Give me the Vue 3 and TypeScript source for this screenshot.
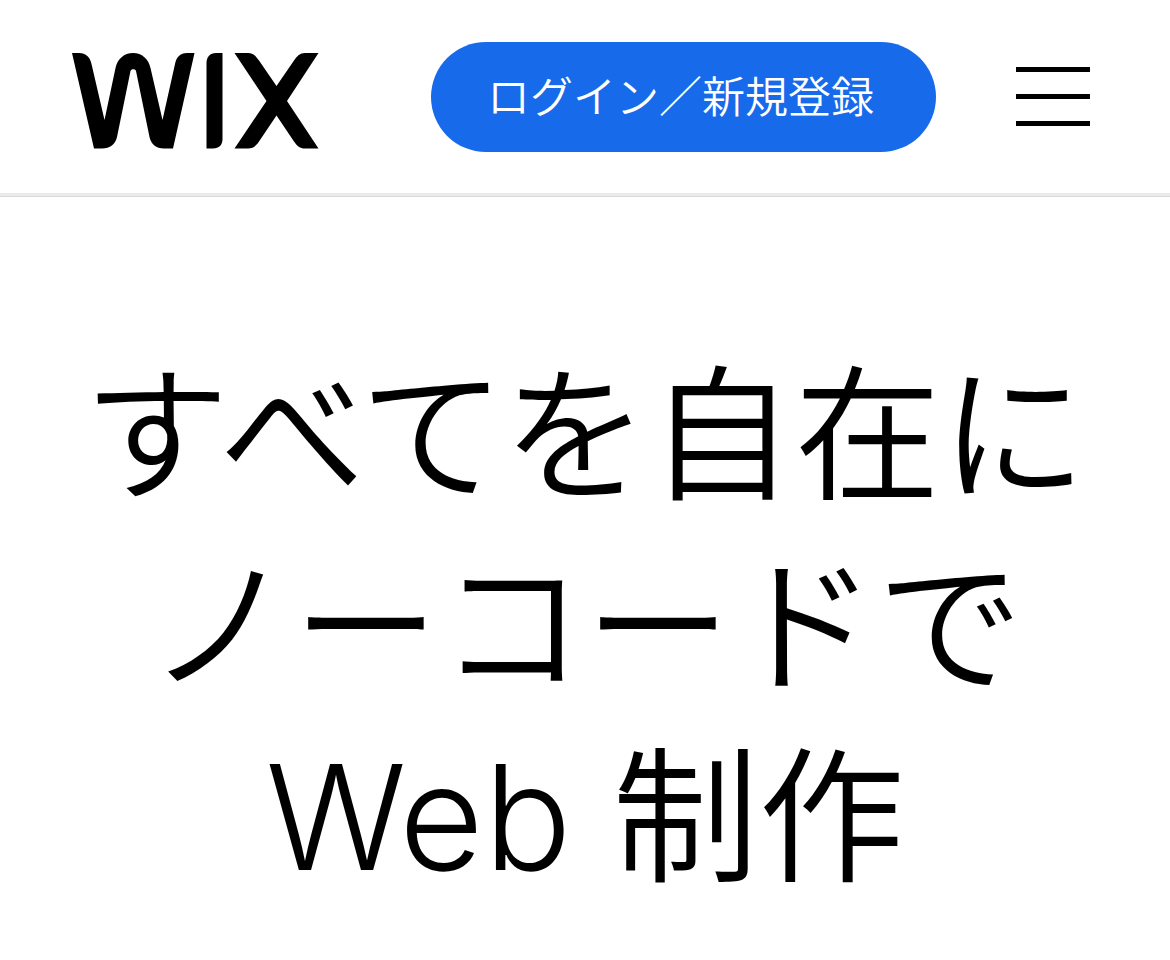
<script setup lang="ts">
const headingLines: string[] = ['すべてを自在に', 'ノーコードで', 'Web 制作']
</script>

<template>
  <div class="page">
    <header class="header">
      <a class="logo" href="#" aria-label="Wix">
        <svg viewBox="0 0 247 96" width="247" height="96" aria-hidden="true">
          <path d="M0 0H7C14 0 18 4 19.5 11L32.5 67L43.5 15C45.5 6 52 0 61 0C70 0 76.5 6 78.5 15L90.5 67L103 11C104.5 4 108 0 115 0H122.5L101 95.5H92C84 95.5 79 91 77.5 84L64 18C63.5 15.5 59 15.5 58.5 18L45 84C43.5 91 38 95.5 30 95.5H22Z" />
          <path d="M134.5 10C134.5 4 138 0 144 0H150.5V86C150.5 92 147 95.5 141 95.5H134.5Z" />
          <path d="M162.5 0H176C181 0 184 3 187 7.5L204.5 33L222 7.5C225 3 228 0 233 0H246.5L215 48L246.5 95.5H233C228 95.5 225 93 222 88.5L204.5 62.5L187 88.5C184 93 181 95.5 176 95.5H162.5L194.5 48Z" />
        </svg>
      </a>
      <button class="login" type="button">ログイン／新規登録</button>
      <button class="menu" type="button" aria-label="メニュー">
        <span class="bar"></span>
        <span class="bar"></span>
        <span class="bar"></span>
      </button>
    </header>
    <main class="hero">
      <h1 class="title">
        <span v-for="line in headingLines" :key="line" class="line">{{ line }}</span>
      </h1>
    </main>
  </div>
</template>

<style>
body {
  margin: 0;
  background: #fff;
}
</style>

<style scoped>
.page {
  color: #000;
  background: #fff;
  font-family: Inter, "Noto Sans CJK JP", sans-serif;
}

.header {
  box-sizing: border-box;
  display: flex;
  align-items: center;
  min-height: 196px;
  padding: 0 80px 0 72px;
  border-bottom: 3px solid #ebebeb;
  box-shadow: 0 1px 0 #d8d8d8;
}

.logo {
  display: block;
  margin-top: 8px;
  color: #000;
}

.logo svg {
  display: block;
  fill: currentColor;
}

.login {
  height: 110px;
  margin-left: auto;
  padding: 0 62px 6px 56px;
  border: 0;
  border-radius: 55px;
  background: #176aea;
  color: #fff;
  font-family: "Noto Sans CJK JP", sans-serif;
  font-size: 43px;
  font-weight: 350;
  line-height: 64px;
  white-space: nowrap;
}

.menu {
  display: flex;
  flex-direction: column;
  gap: 22px;
  width: 74px;
  margin-left: 80px;
  padding: 0;
  border: 0;
  background: none;
}

.bar {
  height: 5px;
  background: #000;
}

.hero {
  padding: 144px 24px 40px;
}

.title {
  margin: 0;
  font-size: 146px;
  font-weight: 350;
  line-height: 191px;
  text-align: center;
}

.line {
  display: block;
  white-space: nowrap;
}
</style>
